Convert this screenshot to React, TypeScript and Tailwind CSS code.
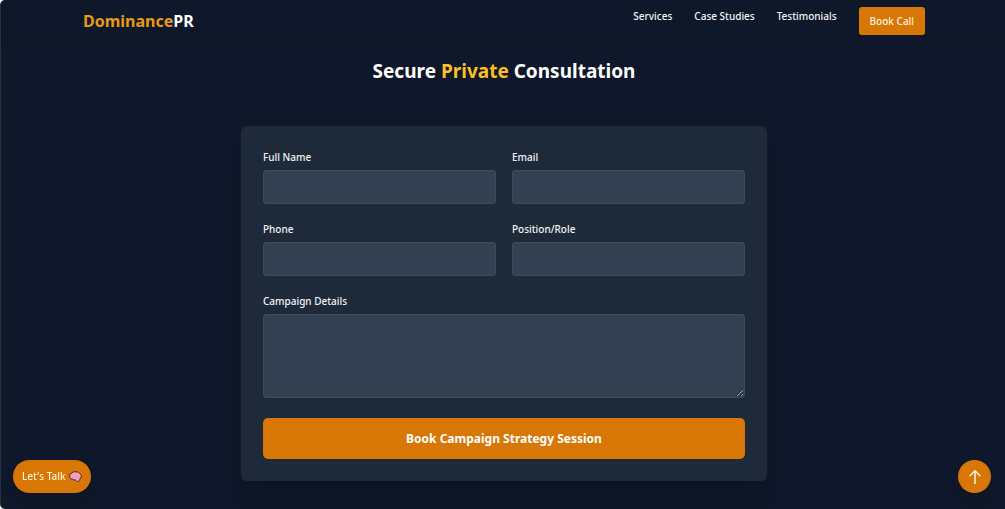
import type { ReactNode } from "react";

const navLinks = ["Services", "Case Studies", "Testimonials"];

const fieldClass =
  "block w-full rounded-[3px] border border-[#3d4b5c] bg-[#334153] px-2 text-[10px] text-white outline-none focus:border-amber-500";

function Field({ id, label, children }: { id: string; label: string; children: ReactNode }) {
  return (
    <div>
      <label htmlFor={id} className="mb-1 block text-[10px] leading-[18px] font-medium text-gray-100">
        {label}
      </label>
      {children}
    </div>
  );
}

function TextField({ id, label, type = "text" }: { id: string; label: string; type?: string }) {
  return (
    <Field id={id} label={label}>
      <input id={id} name={id} type={type} className={`${fieldClass} h-[34px]`} />
    </Field>
  );
}

function BrainIcon() {
  return (
    <svg viewBox="0 0 26 22" className="h-[11px] w-[13px]" aria-hidden="true">
      <path
        d="M2 13C0 9 2 5 6 4C8 1 12 1 14 2C18 1 22 4 23 7C26 10 25 14 22 15C22 18 20 21 17 21C14 21 14 18 12 17C9 19 7 17 7 16C4 17 2 15 2 13Z"
        fill="#f3a5bb"
        stroke="#49252d"
        strokeWidth="2"
        strokeLinejoin="round"
      />
      <path
        d="M6 8C8 6 10 8 10 10M13 4C12 7 15 8 17 7M5 13C8 14 10 12 13 12C16 12 17 15 21 14M18 10C20 9 21 9 22 10"
        fill="none"
        stroke="#d98aa2"
        strokeWidth="1"
        strokeLinecap="round"
      />
    </svg>
  );
}

export default function App() {
  return (
    <div className="bg-white font-['Noto_Sans','Open_Sans',sans-serif] text-white">
      <div className="flex min-h-screen flex-col rounded-l-[5px] border-l border-[#29303d] bg-[#0f172a] pl-[2px]">
        <header className="shadow-sm">
          <div className="mx-auto flex h-[42px] max-w-[874px] items-center justify-between px-4">
            <a href="#home" className="text-[16px] leading-6 font-bold text-[#e79a17]">
              Dominance<span className="text-white">PR</span>
            </a>
            <nav className="flex items-start gap-[22px] text-[10px] leading-[18px] font-medium">
              {navLinks.map((name) => (
                <a key={name} href="#" className="text-gray-100">
                  {name}
                </a>
              ))}
              <a href="#book" className="rounded-[3px] bg-[#d97706] px-[11px] py-[5px] text-[#fff3dc]">
                Book Call
              </a>
            </nav>
          </div>
        </header>

        <main id="book" className="px-4 pt-[15px] pb-7">
          <h1 className="text-center text-[19px] leading-7 font-bold">
            Secure <span className="text-[#fbbf24]">Private</span> Consultation
          </h1>
          <form
            className="mx-auto mt-[41px] flex max-w-[526px] flex-col gap-5 rounded-[6px] bg-[#1e293a] p-[22px] shadow-xl"
            onSubmit={(e) => e.preventDefault()}
          >
            <div className="grid grid-cols-2 gap-4">
              <TextField id="name" label="Full Name" />
              <TextField id="email" label="Email" type="email" />
              <TextField id="phone" label="Phone" type="tel" />
              <TextField id="role" label="Position/Role" />
              <div className="col-span-2">
                <Field id="details" label="Campaign Details">
                  <textarea id="details" name="details" className={`${fieldClass} h-[84px] resize-y py-2`} />
                </Field>
              </div>
            </div>
            <button type="submit" className="h-[41px] rounded-[5px] bg-[#d97706] text-[12px] font-bold">
              Book Campaign Strategy Session
            </button>
          </form>
        </main>
      </div>

      <button
        type="button"
        className="fixed bottom-4 left-[13px] flex h-[33px] items-center gap-1 rounded-full bg-[#d97706] px-[9px] text-[10px] font-medium text-[#fff3dc] shadow-lg"
      >
        Let's Talk <BrainIcon />
      </button>
      <button
        type="button"
        aria-label="Back to top"
        className="fixed right-[14px] bottom-4 flex size-[33px] items-center justify-center rounded-full bg-[#d97706] text-[#fff3dc] shadow-lg"
      >
        <svg viewBox="0 0 16 16" className="size-4" fill="none" stroke="currentColor" strokeWidth="1.5" strokeLinecap="round" strokeLinejoin="round" aria-hidden="true">
          <path d="M8 14.5V1.8M3 6.8L8 1.8L13 6.8" />
        </svg>
      </button>
    </div>
  );
}
